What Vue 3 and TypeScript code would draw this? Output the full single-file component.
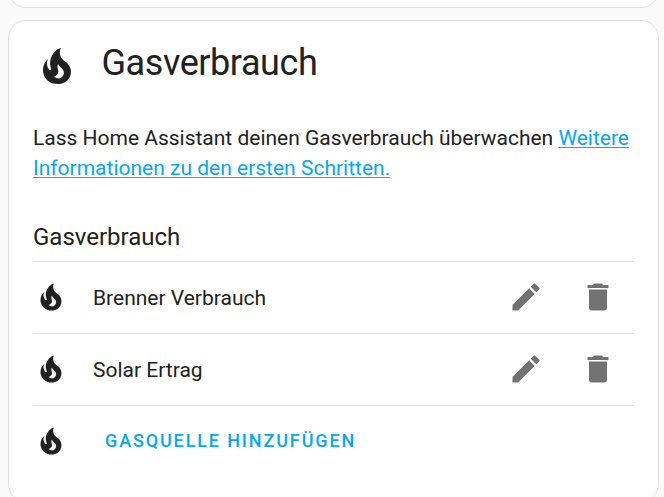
<script setup lang="ts">
interface Source {
  id: number
  name: string
}

const sources: Source[] = [
  { id: 1, name: 'Brenner Verbrauch' },
  { id: 2, name: 'Solar Ertrag' },
]

const firePath =
  'M17.66 11.2C17.43 10.9 17.15 10.64 16.89 10.38C16.22 9.78 15.46 9.35 14.82 8.72C13.33 7.26 13 4.85 13.95 3C13 3.23 12.17 3.75 11.46 4.32C8.87 6.4 7.85 10.07 9.07 13.22C9.11 13.32 9.15 13.42 9.15 13.55C9.15 13.77 9 13.97 8.8 14.05C8.57 14.15 8.33 14.09 8.14 13.93C8.08 13.88 8.04 13.83 8 13.76C6.87 12.33 6.69 10.28 7.45 8.64C5.78 10 4.87 12.3 5 14.47C5.06 14.97 5.12 15.47 5.29 15.97C5.43 16.57 5.7 17.17 6 17.7C7.08 19.43 8.95 20.67 10.96 20.92C13.1 21.19 15.39 20.8 17.03 19.32C18.86 17.66 19.5 15 18.56 12.72L18.43 12.46C18.22 12 17.66 11.2 17.66 11.2M14.5 17.5C14.22 17.74 13.76 18 13.4 18.1C12.28 18.5 11.16 17.94 10.5 17.28C11.69 17 12.4 16.12 12.61 15.23C12.78 14.43 12.46 13.77 12.33 13C12.21 12.26 12.23 11.63 12.5 10.94C12.69 11.32 12.89 11.7 13.13 12C13.9 13 15.11 13.44 15.37 14.8C15.41 14.94 15.43 15.08 15.43 15.23C15.46 16.05 15.1 16.95 14.5 17.5H14.5Z'
const pencilPath =
  'M20.71,7.04C21.1,6.65 21.1,6 20.71,5.63L18.37,3.29C18,2.9 17.35,2.9 16.96,3.29L15.12,5.12L18.87,8.87M3,17.25V21H6.75L17.81,9.93L14.06,6.18L3,17.25Z'
const deletePath =
  'M19,4H15.5L14.5,3H9.5L8.5,4H5V6H19M6,19A2,2 0 0,0 8,21H16A2,2 0 0,0 18,19V7H6V19Z'
</script>

<template>
  <main class="page">
    <section class="card previous"></section>
    <section class="card gas">
      <h1 class="header">
        <svg class="header-icon" viewBox="0 0 24 24"><path :d="firePath" /></svg>
        <span>Gasverbrauch</span>
      </h1>
      <p class="intro">
        Lass Home Assistant deinen Gasverbrauch überwachen
        <a href="#">Weitere Informationen zu den ersten Schritten.</a>
      </p>
      <h3 class="subtitle">Gasverbrauch</h3>
      <div v-for="source in sources" :key="source.id" class="row">
        <svg class="row-icon" viewBox="0 0 24 24"><path :d="firePath" /></svg>
        <span class="name">{{ source.name }}</span>
        <button class="action" aria-label="Bearbeiten">
          <svg viewBox="0 0 24 24"><path :d="pencilPath" /></svg>
        </button>
        <button class="action" aria-label="Löschen">
          <svg viewBox="0 0 24 24"><path :d="deletePath" /></svg>
        </button>
      </div>
      <div class="row last">
        <svg class="row-icon" viewBox="0 0 24 24"><path :d="firePath" /></svg>
        <button class="add">Gasquelle hinzufügen</button>
      </div>
    </section>
  </main>
</template>

<style>
body {
  background: #fafafa;
  overflow: hidden;
}
</style>

<style scoped>
.page {
  box-sizing: border-box;
  display: flex;
  flex-direction: column;
  height: 497px;
  overflow: hidden;
  padding: 0 5px 0 8px;
  font-family: Roboto, sans-serif;
  color: #212121;
}
.card {
  box-sizing: border-box;
  flex: none;
  background: #fff;
  border: 1px solid #e0e0e0;
  border-radius: 18px;
}
.previous {
  height: 48px;
  margin-top: -40px;
}
.gas {
  margin-top: 12px;
  height: 482px;
  padding: 0 24px;
}
.header {
  display: flex;
  align-items: center;
  height: 84px;
  margin: 0;
  font-size: 36px;
  font-weight: 400;
  letter-spacing: -0.432px;
}
.header-icon {
  width: 48px;
  height: 48px;
  margin: 6px 20.5px 0 0;
}
svg {
  display: block;
  flex: none;
  fill: currentColor;
}
.intro {
  margin: 18px 0 0;
  font-size: 21px;
  line-height: 30px;
  letter-spacing: -0.01px;
}
.intro a {
  color: #03a9f4;
  letter-spacing: 0;
  text-decoration-thickness: 1px;
  text-underline-offset: 2px;
}
.subtitle {
  height: 44px;
  margin: 34px 0 0;
  font-size: 24px;
  font-weight: 400;
  line-height: 40px;
}
.row {
  box-sizing: border-box;
  display: flex;
  align-items: center;
  height: 72px;
  border-top: 1px solid #e0e0e0;
}
.row-icon {
  width: 36px;
  height: 36px;
  margin: 0 24px 1px 0;
}
.name {
  flex: 1;
  font-size: 21px;
}
.action {
  display: flex;
  align-items: center;
  justify-content: center;
  width: 72px;
  height: 70px;
  margin-bottom: 1px;
  padding: 0;
  border: 0;
  background: none;
  color: #727272;
}
.action svg {
  width: 36px;
  height: 36px;
}
.add {
  margin: 0 0 2px;
  padding: 0 12px;
  border: 0;
  background: none;
  color: #03a9f4;
  font: 500 18px Roboto, sans-serif;
  letter-spacing: 1.87px;
  text-transform: uppercase;
}
</style>
